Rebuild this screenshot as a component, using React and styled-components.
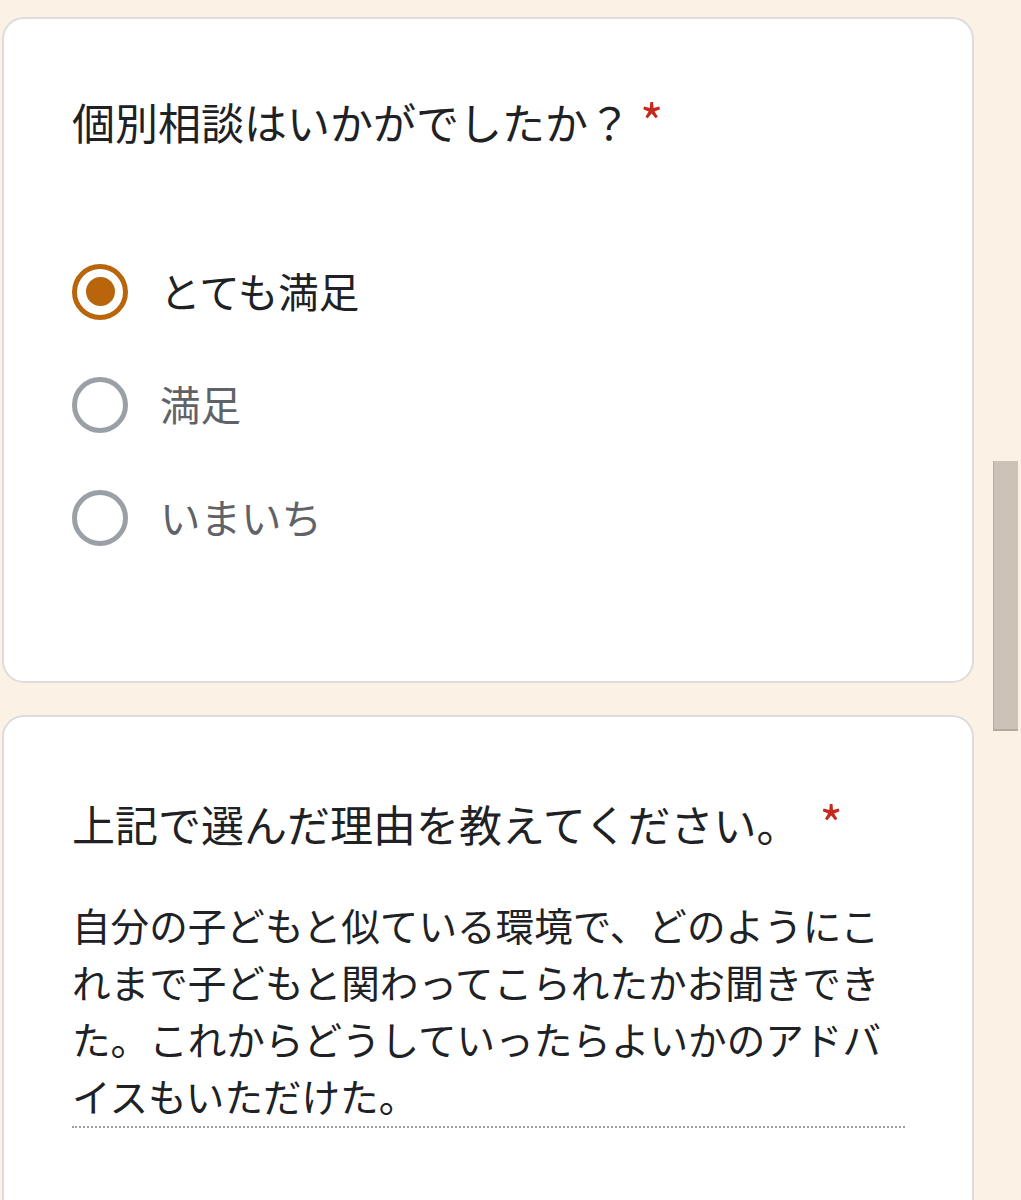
import React from 'react';
import styled, { createGlobalStyle } from 'styled-components';

const GlobalStyle = createGlobalStyle`
  html, body {
    margin: 0;
    padding: 0;
    background: #fbf1e4;
    font-family: "Noto Sans CJK JP", "Noto Sans", sans-serif;
    color: #202124;
    overflow: hidden;
  }
`;

const Page = styled.div`
  display: flex;
  flex-direction: column;
  gap: 32px;
  padding: 17px 0 0 2px;
  width: 972px;
`;

const Card = styled.section`
  background: #fff;
  border: 2px solid #dcdcdc;
  border-radius: 22px;
  padding: ${(p) => p.$pad};
`;

const Title = styled.h2`
  margin: 0;
  font-size: 43px;
  font-weight: 400;
  line-height: 60px;
  color: #202124;
`;

const Star = styled.span`
  color: #c5281c;
  font-size: 50px;
  line-height: 0;
  vertical-align: -2px;
  margin-left: ${(p) => p.$gap};
`;

const Options = styled.div`
  display: flex;
  flex-direction: column;
  margin-top: 84px;
`;

const Option = styled.label`
  display: flex;
  align-items: center;
  gap: 32px;
  height: 113px;
  cursor: pointer;
`;

const Radio = styled.span`
  flex: none;
  width: 56px;
  height: 56px;
  box-sizing: border-box;
  border-radius: 50%;
  border: 5px solid ${(p) => (p.$checked ? '#b8650b' : '#9aa0a6')};
  display: flex;
  align-items: center;
  justify-content: center;

  &::after {
    content: "";
    width: 29px;
    height: 29px;
    border-radius: 50%;
    background: #b8650b;
    display: ${(p) => (p.$checked ? 'block' : 'none')};
  }
`;

const OptionText = styled.span`
  font-size: 40.5px;
  line-height: 1;
  color: ${(p) => (p.$checked ? '#202124' : '#5f6368')};
`;

const Answer = styled.div`
  margin-top: 43px;
  width: 833px;
  box-sizing: border-box;
  padding: 0 18px 2px 0;
  font-size: 38.6px;
  line-height: 57px;
  color: #202124;
  border-bottom: 2px dotted #9e9e9e;
`;

const Thumb = styled.div`
  position: fixed;
  left: 993px;
  top: 461px;
  width: 25px;
  height: 270px;
  box-sizing: border-box;
  background: #ccc3b8;
  border-left: 1px solid #b8afa4;
  border-bottom: 2px solid #b3aa9f;
`;

const options = [
  { label: 'とても満足', checked: true },
  { label: '満足', checked: false },
  { label: 'いまいち', checked: false },
];

export default function App() {
  return (
    <>
      <GlobalStyle />
      <Page>
        <Card $pad="72px 68px 107px">
          <Title>
            個別相談はいかがでしたか？<Star $gap="9px">*</Star>
          </Title>
          <Options>
            {options.map((o) => (
              <Option key={o.label}>
                <Radio $checked={o.checked} />
                <OptionText $checked={o.checked}>{o.label}</OptionText>
              </Option>
            ))}
          </Options>
        </Card>
        <Card $pad="76px 68px 120px">
          <Title>
            上記で選んだ理由を教えてください。<Star $gap="20px">*</Star>
          </Title>
          <Answer>
            自分の子どもと似ている環境で、どのようにこれまで子どもと関わってこられたかお聞きできた。これからどうしていったらよいかのアドバイスもいただけた。
          </Answer>
        </Card>
      </Page>
      <Thumb />
    </>
  );
}
